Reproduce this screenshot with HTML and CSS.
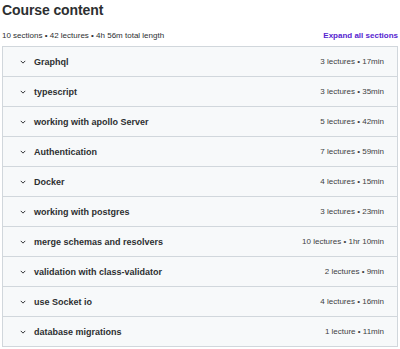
FILE: index.html
```html
<!DOCTYPE html>
<html lang="en">

<head>
    <meta charset="UTF-8">
    <title>Course content</title>
    <link rel="stylesheet" href="styles.css">
</head>

<body>
    <div class="course-content">
        <h2>Course content</h2>

        <div class="summary">
            <span>10 sections • 42 lectures • 4h 56m total length</span>
            <button class="expand-all">Expand all sections</button>
        </div>

        <div class="sections">
            <div class="section">
                <div class="section-title"><svg class="chevron" viewBox="0 0 8 5"><path d="M1 1l3 3 3-3"/></svg>Graphql</div>
                <span class="section-meta">3 lectures • 17min</span>
            </div>
            <div class="section">
                <div class="section-title"><svg class="chevron" viewBox="0 0 8 5"><path d="M1 1l3 3 3-3"/></svg>typescript</div>
                <span class="section-meta">3 lectures • 35min</span>
            </div>
            <div class="section">
                <div class="section-title"><svg class="chevron" viewBox="0 0 8 5"><path d="M1 1l3 3 3-3"/></svg>working with apollo Server</div>
                <span class="section-meta">5 lectures • 42min</span>
            </div>
            <div class="section">
                <div class="section-title"><svg class="chevron" viewBox="0 0 8 5"><path d="M1 1l3 3 3-3"/></svg>Authentication</div>
                <span class="section-meta">7 lectures • 59min</span>
            </div>
            <div class="section">
                <div class="section-title"><svg class="chevron" viewBox="0 0 8 5"><path d="M1 1l3 3 3-3"/></svg>Docker</div>
                <span class="section-meta">4 lectures • 15min</span>
            </div>
            <div class="section">
                <div class="section-title"><svg class="chevron" viewBox="0 0 8 5"><path d="M1 1l3 3 3-3"/></svg>working with postgres</div>
                <span class="section-meta">3 lectures • 23min</span>
            </div>
            <div class="section">
                <div class="section-title"><svg class="chevron" viewBox="0 0 8 5"><path d="M1 1l3 3 3-3"/></svg>merge schemas and resolvers</div>
                <span class="section-meta">10 lectures • 1hr 10min</span>
            </div>
            <div class="section">
                <div class="section-title"><svg class="chevron" viewBox="0 0 8 5"><path d="M1 1l3 3 3-3"/></svg>validation with class-validator</div>
                <span class="section-meta">2 lectures • 9min</span>
            </div>
            <div class="section">
                <div class="section-title"><svg class="chevron" viewBox="0 0 8 5"><path d="M1 1l3 3 3-3"/></svg>use Socket io</div>
                <span class="section-meta">4 lectures • 16min</span>
            </div>
            <div class="section">
                <div class="section-title"><svg class="chevron" viewBox="0 0 8 5"><path d="M1 1l3 3 3-3"/></svg>database migrations</div>
                <span class="section-meta">1 lecture • 11min</span>
            </div>
        </div>
    </div>
</body>

</html>
```

FILE: styles.css
```css
body {
    margin: 0;
    background-color: #fff;
    color: #2d2f31;
    font-family: 'Liberation Sans', Arial, sans-serif;
}

.course-content {
    padding: 0 2px;
}

h2 {
    margin: 0;
    padding-top: 1px;
    font-size: 14px;
    line-height: 18px;
    font-weight: 700;
    letter-spacing: -0.1px;
}

.summary {
    display: flex;
    justify-content: space-between;
    align-items: center;
    margin-top: 9px;
    height: 14px;
    margin-bottom: 4px;
    font-size: 8px;
}

.expand-all {
    font-family: inherit;
    background: none;
    border: none;
    padding: 0;
    color: #5624d0;
    font-weight: 700;
    font-size: 8px;
    cursor: pointer;
}

.sections {
    border: 1px solid #d1d7dc;
    border-bottom: none;
}

.section {
    display: flex;
    justify-content: space-between;
    align-items: center;
    height: 29px;
    padding: 0 13px 0 17px;
    background-color: #f7f9fa;
    border-bottom: 1px solid #d1d7dc;
}

.section-title {
    display: flex;
    align-items: center;
    font-size: 9px;
    font-weight: 700;
}

.chevron {
    width: 6px;
    height: 4px;
    margin-right: 8px;
    fill: none;
    stroke: #2d2f31;
    stroke-width: 1.3;
}

.section-meta {
    font-size: 8px;
    color: #3e4143;
}
```
